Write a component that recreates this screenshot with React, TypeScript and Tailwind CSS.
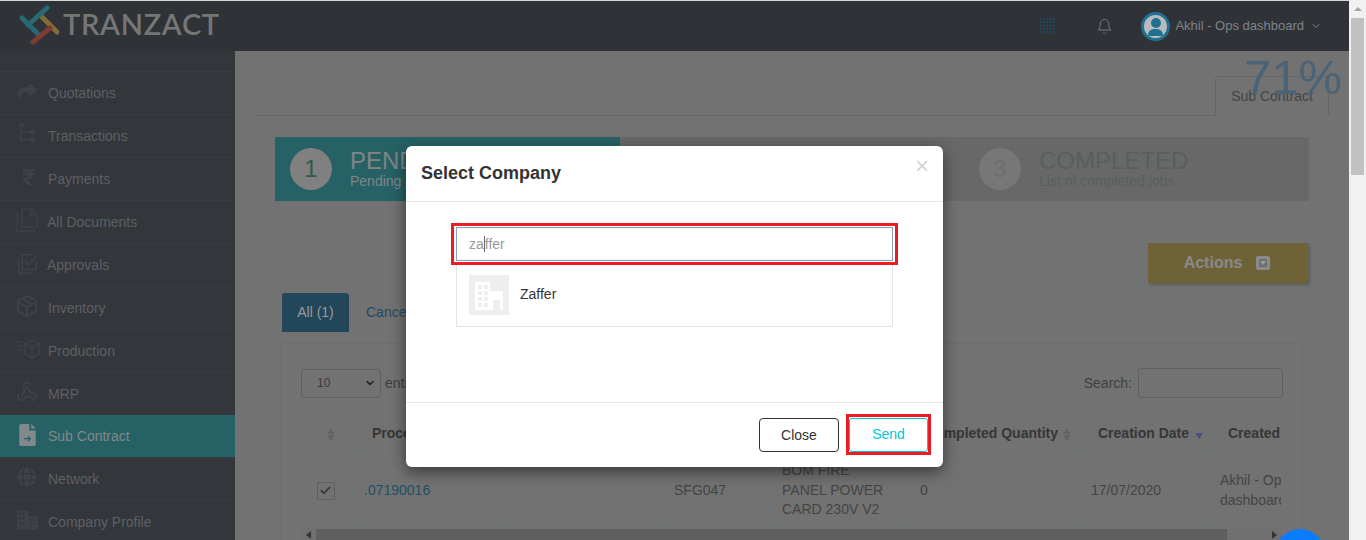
import React from "react";
import { FaShare, FaRupeeSign, FaGlobe } from "react-icons/fa";
import { LuWebhook, LuBell, LuChevronDown, LuCheck } from "react-icons/lu";

const ICON = "#3e4247";
const ic = "w-[22px] h-[22px]";
const TreeIcon = () => (
  <svg viewBox="0 0 22 24" className="w-[20px] h-[22px]" fill={ICON}>
    <rect x="1" y="0" width="6" height="4" />
    <rect x="13" y="8" width="6" height="4" />
    <rect x="13" y="16" width="6" height="4" />
    <path d="M3 4v14h9M3 10h9" fill="none" stroke={ICON} strokeWidth="1.5" />
  </svg>
);
const DocsIcon = () => (
  <svg viewBox="0 0 24 24" className="w-[24px] h-[24px]" fill="none" stroke={ICON} strokeWidth="1.5">
    <path d="M7 1h9l6 6v12H7z" />
    <path d="M16 1v6h6" />
    <path d="M4 5H2v18h17v-2" />
  </svg>
);
const ApproveIcon = () => (
  <svg viewBox="0 0 24 24" className="w-[22px] h-[22px]" fill="none" stroke={ICON} strokeWidth="1.8">
    <path d="M22 10v9H7V3h10" />
    <path d="M3 7v16h15" />
    <path d="M10 9l4 5 9-11" />
  </svg>
);
const CubeIcon = () => (
  <svg viewBox="0 0 24 24" className="w-[22px] h-[22px]" fill="none" stroke={ICON} strokeWidth="2.2">
    <path d="M12 1l10 5.500v11L12 23 2 17.500v-11z" />
    <path d="M2 8l10 5 10-5M12 13v10M7 4l10 6" />
  </svg>
);
const ProdIcon = () => (
  <svg viewBox="0 0 26 20" className="w-[26px] h-[20px]" fill="none" stroke={ICON} strokeWidth="1.6">
    <path d="M18 1l7 3.500v10L18 19l-7-4.500v-10z" />
    <path d="M11 5l7 4 7-4M18 9v10" />
    <path d="M1 3h7M3 7h5M5 11h3" />
  </svg>
);
const SubIcon = () => (
  <svg viewBox="0 0 18 24" className="w-[17px] h-[22px]">
    <path d="M2 0h9v7h7v15a2 2 0 0 1-2 2H2a2 2 0 0 1-2-2V2a2 2 0 0 1 2-2z" fill="#82898b" />
    <path d="M13 0l5 5h-5z" fill="#82898b" />
    <path d="M5 16h7M9.500 13.500L12 16l-2.500 2.500" fill="none" stroke="#266165" strokeWidth="1.5" />
  </svg>
);
const BuildingIcon = () => (
  <svg viewBox="0 0 22 20" className="w-[21px] h-[20px]" fill={ICON}>
    <path fillRule="evenodd" d="M0 0h12v6h10v14H0zM2 2v3h2V2zm4 0v3h2V2zM2 7v3h2V7zm4 0v3h2V7zm-4 5v3h2v-3zm4 0v3h2v-3zm8-3v2h2V9zm4 0v2h2V9zm-4 4v2h2v-2zm4 0v2h2v-2z" />
  </svg>
);

const nav = [
  { label: "Quotations", icon: <FaShare className="w-[19px] h-[19px]" color={ICON} />, x: "pl-[18px]", tx: "pl-[11px]" },
  { label: "Transactions", icon: <TreeIcon />, x: "pl-[18px]", tx: "pl-[10px]" },
  { label: "Payments", icon: <FaRupeeSign className="w-[13px] h-[19px]" color={ICON} />, x: "pl-[22px]", tx: "pl-[13px]" },
  { label: "All Documents", icon: <DocsIcon />, x: "pl-[15px]", tx: "pl-[8px]" },
  { label: "Approvals", icon: <ApproveIcon />, x: "pl-[16px]", tx: "pl-[9px]" },
  { label: "Inventory", icon: <CubeIcon />, x: "pl-[16px]", tx: "pl-[10px]" },
  { label: "Production", icon: <ProdIcon />, x: "pl-[14px]", tx: "pl-[8px]" },
  { label: "MRP", icon: <LuWebhook className={ic} color={ICON} />, x: "pl-[16px]", tx: "pl-[10px]" },
  { label: "Sub Contract", icon: <SubIcon />, x: "pl-[19px]", tx: "pl-[12px] -mt-[2px]", active: true },
  { label: "Network", icon: <FaGlobe className="w-[20px] h-[20px]" color={ICON} />, x: "pl-[17px]", tx: "pl-[11px]" },
  { label: "Company Profile", icon: <BuildingIcon />, x: "pl-[17px]", tx: "pl-[10px]" },
];

const Sort = () => (
  <span className="inline-flex flex-col gap-[1px] ml-[5px] mt-[2px] align-middle">
    <span className="w-0 h-0 border-x-[4px] border-x-transparent border-b-[6px] border-b-[#646464]" />
    <span className="w-0 h-0 border-x-[4px] border-x-transparent border-t-[6px] border-t-[#646464]" />
  </span>
);

const cell = "border-r-2 border-r-[#6b7573] flex items-center px-[13px] overflow-hidden";
const headCell = "border-r-2 border-r-[#6b7573] flex items-center pb-[2px] font-bold text-[#363636] whitespace-nowrap overflow-hidden";
const cols = "grid grid-cols-[51px_150px_158px_112px_134px_173px_129px_74px]";

export default function App() {
  return (
    <div className="relative w-[1366px] h-[540px] overflow-hidden flex bg-[#f1f1f1] text-[14px] font-['Liberation_Sans',Arial,sans-serif]">
      <div className="w-[1349px] h-[540px] flex flex-col bg-[#727272] border-t border-t-[#d8d8d8]">
        <header className="h-[50px] shrink-0 bg-[#2f3338] flex items-center">
          <div className="flex items-center pl-[19px] flex-1">
            <svg viewBox="0 0 42 40" className="w-[42px] h-[40px] -mt-[2px]" fill="none" strokeWidth="5" strokeLinecap="round">
              <path d="M23 12l15 15" stroke="#7f6d35" />
              <path d="M31 23L14 37" stroke="#7e3b30" />
              <path d="M3 13l15 15" stroke="#256a75" />
              <path d="M28 3L9 20" stroke="#256a75" />
            </svg>
            <span className="ml-[2px] -mt-[6px] font-['Lato',sans-serif] text-[29px] leading-none font-semibold tracking-[0.7px] text-[#767676]">TRANZACT</span>
          </div>
          <svg viewBox="0 0 16 16" className="w-[16px] h-[16px] mr-[40px]" fill="#1a4f68">
            {[0, 1, 2, 3, 4].flatMap((r) =>
              [0, 1, 2, 3, 4].map((c) => <rect key={`${r}-${c}`} x={c * 3.300} y={r * 3.300} width="1.600" height="1.600" />)
            )}
          </svg>
          <LuBell className="w-[17px] h-[19px] mr-[28px]" color="#777b7e" strokeWidth={1.4} />
          <div className="w-[29px] h-[29px] rounded-full bg-[#b9bcbe] border-[3px] border-[#20718f] flex flex-col items-center justify-end overflow-hidden">
            <span className="w-[10px] h-[10px] rounded-full bg-[#20718f] mb-[1px]" />
            <span className="w-[15px] h-[7px] rounded-t-[6px] bg-[#20718f] mb-[2px]" />
          </div>
          <span className="ml-[5px] text-[13px] text-[#7f8386] whitespace-nowrap">Akhil - Ops dashboard</span>
          <LuChevronDown className="w-[12px] h-[12px] ml-[6px] mr-[27px]" color="#7f8386" />
        </header>
        <div className="flex flex-1 min-h-0">
          <aside className="w-[235px] shrink-0 bg-[#33363b] pt-[20px] overflow-hidden">
            {nav.map((n) => (
              <div
                key={n.label}
                className={`flex items-center ${n.x} border-t ${n.active ? "h-[42px] bg-[#266165] border-t-[#266165] text-[#82898b]" : "h-[43px] border-t-[#393c41] text-[#5d6064]"}`}
              >
                <span className="-mt-[4px] flex">{n.icon}</span>
                <span className={`${n.tx} leading-none`}>{n.label}</span>
              </div>
            ))}
          </aside>
          <main className="flex-1 min-w-0 relative overflow-hidden">
            <div className="ml-5 mr-5 h-[65px] border-b border-b-[#666] flex justify-end items-end">
              <div className="w-[114px] h-[40px] -mb-[1px] border border-[#666] border-b-[#727272] rounded-t-[4px] flex items-center justify-center text-[#444]">
                Sub Contract
              </div>
            </div>
            <div className="ml-10 mr-10 mt-[21px] h-[64px] bg-[#686868] flex">
              <div className="w-[345px] bg-[#266165] flex items-center pl-[15px]">
                <div className="w-[42px] h-[42px] rounded-full bg-[#808080] text-[#2e5c45] text-[24px] flex items-center justify-center">1</div>
                <div className="ml-[18px] text-[#808586] leading-none">
                  <div className="text-[24px] leading-[24px]">PENDING</div>
                  <div className="text-[14px] leading-[16px]">Pending jobs</div>
                </div>
              </div>
              <div className="ml-[359px] flex items-center">
                <div className="w-[42px] h-[42px] rounded-full bg-[#777777] text-[#6e6e6e] text-[24px] flex items-center justify-center">3</div>
                <div className="ml-[18px] text-[#566060] leading-none">
                  <div className="text-[24px] leading-[24px]">COMPLETED</div>
                  <div className="text-[14px] leading-[16px]">List of completed jobs</div>
                </div>
              </div>
            </div>
            <div className="flex justify-end mr-[41px] mt-[42px]">
              <div className="w-[160px] h-[40px] bg-[#6e6237] shadow-[2px_2px_3px_rgba(0,0,0,0.2)] flex items-center justify-center gap-[14px] pr-[2px] font-bold text-[16px] text-[#8a8a8a]">
                Actions
                <span className="w-[14px] h-[14px] rounded-[2px] border-[3px] border-[#8a8a8a] bg-[#6f6f6f] flex items-center justify-center">
                  <span className="w-0 h-0 border-x-[3px] border-x-transparent border-t-[4px] border-t-[#9a9a9a]" />
                </span>
              </div>
            </div>
            <div className="ml-[47px] mt-[10px] flex items-center h-[39px]">
              <div className="w-[67px] h-[39px] bg-[#22475a] rounded-t-[3px] flex items-center justify-center text-[#9a9a9a]">All (1)</div>
              <span className="ml-[17px] text-[#234a60]">Cancelled (0)</span>
            </div>
            <div className="ml-[45px] mr-[46px] mt-[11px] h-[200px] border border-[#6a6e6e] rounded-[4px] pt-[24px] pl-[20px] pr-[19px]">
              <div className="flex items-center justify-between h-[30px]">
                <div className="flex items-center">
                  <div className="w-[80px] h-[29px] border border-[#5f6060] rounded-[4px] flex items-center pl-[15px] text-[12px] text-[#3b3b3b]">
                    10
                    <LuChevronDown className="w-[12px] h-[12px] ml-[34px]" color="#222" strokeWidth={3} />
                  </div>
                  <span className="ml-[4px] text-[#3f3f3f]">entries</span>
                </div>
                <div className="flex items-center">
                  <span className="text-[#3f3f3f] mr-[6px]">Search:</span>
                  <div className="w-[145px] h-[30px] border border-[#5f6060] rounded-[3px]" />
                </div>
              </div>
              <div className="mt-[16px] w-[981px] border border-[#6b7573] overflow-hidden">
                <div className={`${cols} h-[39px] border-b border-b-[#6b7573]`}>
                  <div className={`${headCell} justify-center pl-[3px]`}><Sort /></div>
                  <div className={`${headCell} pl-[19px]`}>Process</div>
                  <div className={headCell} />
                  <div className={headCell} />
                  <div className={headCell} />
                  <div className={`${headCell} justify-end pr-[7px]`}>Completed Quantity<Sort /></div>
                  <div className={`${headCell} pl-[18px]`}>
                    Creation Date
                    <span className="ml-[6px] mt-[5px] w-0 h-0 border-x-[4px] border-x-transparent border-t-[6px] border-t-[#4a4f7f]" />
                  </div>
                  <div className={`${headCell} !border-r-0 pl-[19px]`}>Created</div>
                </div>
                <div className={`${cols} h-[73px] text-[#444]`}>
                  <div className={`${cell} justify-center !px-0 pr-[2px]`}>
                    <span className="w-[18px] h-[18px] -ml-[2px] border border-[#5f6060] flex items-center justify-center">
                      <LuCheck className="w-[13px] h-[13px]" color="#333" strokeWidth={3} />
                    </span>
                  </div>
                  <div className={`${cell} !pl-[11px] text-[#234f68]`}>.07190016</div>
                  <div className={cell} />
                  <div className={cell}>SFG047</div>
                  <div className={`${cell} !px-[9px] leading-[19.500px]`}>BOM FIRE PANEL POWER CARD 230V V2</div>
                  <div className={cell}>0</div>
                  <div className={`${cell} !pl-[11px]`}>17/07/2020</div>
                  <div className="flex items-center pl-[11px] leading-[19.500px] whitespace-nowrap overflow-hidden">
                    <div>Akhil - Ops<br />dashboard</div>
                  </div>
                </div>
              </div>
              <div className="w-[981px] h-[11px] mt-[1px] bg-[#707070] flex items-center">
                <span className="w-[15px] flex justify-center">
                  <span className="w-0 h-0 border-y-[4px] border-y-transparent border-r-[5px] border-r-[#333]" />
                </span>
                <span className="w-[911px] h-[11px] bg-[#5f5f5f]" />
                <span className="flex-1 flex justify-end pr-[5px]">
                  <span className="w-0 h-0 border-y-[4px] border-y-transparent border-l-[5px] border-l-[#333]" />
                </span>
              </div>
            </div>
            <div className="absolute right-[7px] top-[2px] text-[49px] leading-[48px] text-[#4b6377]">71%</div>
          </main>
        </div>
      </div>
      <div className="w-[17px] h-[540px] bg-[#f1f1f1] flex flex-col items-center pt-[7px]">
        <span className="w-0 h-0 border-x-[4px] border-x-transparent border-b-[4px] border-b-[#a3a3a3]" />
        <span className="mt-[7px] w-[13px] h-[157px] bg-[#c1c1c1]" />
      </div>

      <div className="absolute left-[1275px] top-[529px] w-[50px] h-[50px] rounded-full bg-[#0a7cff]" />

      <div className="absolute left-[406px] top-[146px] w-[537px] h-[321px] bg-white rounded-[6px] shadow-[0_5px_15px_rgba(0,0,0,0.5)] flex flex-col">
        <div className="h-[56px] shrink-0 border-b border-b-[#e5e5e5] flex items-center justify-between pl-[15px] pr-[14px]">
          <span className="text-[18px] font-bold text-[#333]">Select Company</span>
          <span className="text-[24px] leading-none text-[#d4d4d4] -mt-[16px]">×</span>
        </div>
        <div className="flex-1 pt-[21px] pl-[45px]">
          <div className="w-[447px] h-[42px] border-[3px] border-[#ed1c24] p-[1px] pl-[2px]">
            <div className="h-[34px] w-[437px] border border-[#8aa0b8] flex items-center pl-[12px] text-[#9a9a9a]">
              za<span className="inline-block w-0 h-[16px] border-l border-l-[#666]" />ffer
            </div>
          </div>
          <div className="ml-[5px] w-[437px] h-[62px] border border-[#e5e5e5] border-t-0 flex items-start pt-[10px] pl-[12px]">
            <div className="w-[40px] h-[40px] bg-[#eeeeee]">
              <svg viewBox="0 0 40 40" className="w-[40px] h-[40px]">
                <path d="M6 7h15v9h13v19H6z" fill="#ffffff" />
                <path d="M9 10h4v4H9zM15 10h4v4h-4zM9 16h4v4H9zM15 16h4v4h-4zM9 22h4v4H9zM15 22h4v4h-4zM9 28h4v4H9zM15 28h4v4h-4zM24 25h7v10h-7z" fill="#eeeeee" />
              </svg>
            </div>
            <span className="ml-[11px] mt-[9px] text-[#333]">Zaffer</span>
          </div>
        </div>
        <div className="h-[65px] shrink-0 border-t border-t-[#e5e5e5] flex items-start justify-end pt-[11px] pr-[12px]">
          <div className="mt-[4px] w-[80px] h-[34px] border border-[#333] rounded-[4px] flex items-center justify-center text-[#333]">Close</div>
          <div className="ml-[7px] w-[85px] h-[41px] border-[3px] border-[#ed1c24] flex items-center justify-center">
            <div className="w-[79px] h-[34px] border border-[#00c8d7] rounded-[3px] flex items-center justify-center text-[#00c8d7]">Send</div>
          </div>
        </div>
      </div>
    </div>
  );
}
